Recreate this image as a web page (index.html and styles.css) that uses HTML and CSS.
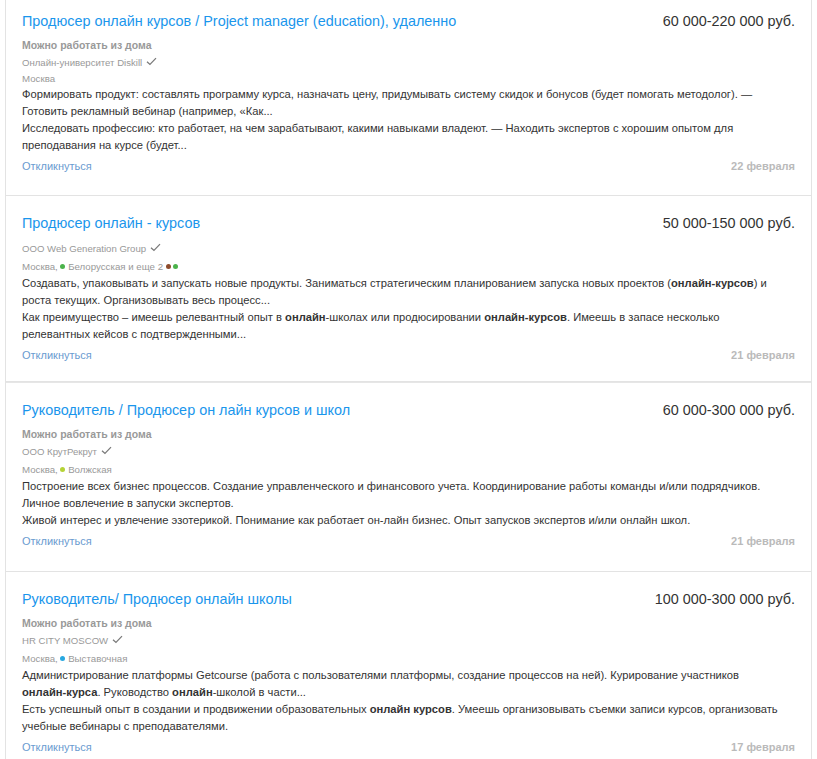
FILE: index.html
```html
<!DOCTYPE html>
<html lang="ru">
<head>
<meta charset="utf-8">
<title>Вакансии</title>
<link rel="stylesheet" href="styles.css">
</head>
<body>
<div class="list">
  <div class="vacancy first">
    <div class="head">
      <a class="title" href="#">Продюсер онлайн курсов / Project manager (education), удаленно</a>
      <div class="salary">60 000-220 000 руб.</div>
    </div>
    <div class="remote">Можно работать из дома</div>
    <div class="company">Онлайн-университет Diskill <svg class="check" viewBox="0 0 12 10" width="11" height="9"><path d="M1 5.2 L4.3 8.3 L11 1.3" fill="none" stroke="#7a7a7a" stroke-width="1.4"/></svg></div>
    <div class="loc">Москва</div>
    <div class="desc">
      <p>Формировать продукт: составлять программу курса, назначать цену, придумывать систему скидок и бонусов (будет помогать методолог). — Готовить рекламный вебинар (например, «Как...</p>
      <p>Исследовать профессию: кто работает, на чем зарабатывают, какими навыками владеют. — Находить экспертов с хорошим опытом для преподавания на курсе (будет...</p>
    </div>
    <div class="foot">
      <a class="respond" href="#">Откликнуться</a>
      <span class="date">22 февраля</span>
    </div>
  </div>

  <div class="vacancy short-bottom">
    <div class="head">
      <a class="title" href="#">Продюсер онлайн - курсов</a>
      <div class="salary">50 000-150 000 руб.</div>
    </div>
    <div class="company company-first">ООО Web Generation Group <svg class="check" viewBox="0 0 12 10" width="11" height="9"><path d="M1 5.2 L4.3 8.3 L11 1.3" fill="none" stroke="#7a7a7a" stroke-width="1.4"/></svg></div>
    <div class="loc metro">Москва, <span class="dot green"></span> Белорусская и еще 2 <span class="dot brown"></span> <span class="dot green"></span></div>
    <div class="desc">
      <p>Создавать, упаковывать и запускать новые продукты. Заниматься стратегическим планированием запуска новых проектов (<b>онлайн-курсов</b>) и роста текущих. Организовывать весь процесс...</p>
      <p>Как преимущество – имеешь релевантный опыт в <b>онлайн</b>-школах или продюсировании <b>онлайн-курсов</b>. Имеешь в запасе несколько релевантных кейсов с подтвержденными...</p>
    </div>
    <div class="foot">
      <a class="respond" href="#">Откликнуться</a>
      <span class="date">21 февраля</span>
    </div>
  </div>

  <div class="vacancy thick">
    <div class="head">
      <a class="title" href="#">Руководитель / Продюсер он лайн курсов и школ</a>
      <div class="salary">60 000-300 000 руб.</div>
    </div>
    <div class="remote">Можно работать из дома</div>
    <div class="company">ООО КрутРекрут <svg class="check" viewBox="0 0 12 10" width="11" height="9"><path d="M1 5.2 L4.3 8.3 L11 1.3" fill="none" stroke="#7a7a7a" stroke-width="1.4"/></svg></div>
    <div class="loc metro">Москва, <span class="dot lime"></span> Волжская</div>
    <div class="desc">
      <p>Построение всех бизнес процессов. Создание управленческого и финансового учета. Координирование работы команды и/или подрядчиков. Личное вовлечение в запуски экспертов.</p>
      <p>Живой интерес и увлечение эзотерикой. Понимание как работает он-лайн бизнес. Опыт запусков экспертов и/или онлайн школ.</p>
    </div>
    <div class="foot">
      <a class="respond" href="#">Откликнуться</a>
      <span class="date">21 февраля</span>
    </div>
  </div>

  <div class="vacancy">
    <div class="head">
      <a class="title" href="#">Руководитель/ Продюсер онлайн школы</a>
      <div class="salary">100 000-300 000 руб.</div>
    </div>
    <div class="remote">Можно работать из дома</div>
    <div class="company">HR CITY MOSCOW <svg class="check" viewBox="0 0 12 10" width="11" height="9"><path d="M1 5.2 L4.3 8.3 L11 1.3" fill="none" stroke="#7a7a7a" stroke-width="1.4"/></svg></div>
    <div class="loc metro">Москва, <span class="dot blue"></span> Выставочная</div>
    <div class="desc">
      <p>Администрирование платформы Getcourse (работа с пользователями платформы, создание процессов на ней). Курирование участников <b class="nowrap">онлайн-курса</b>. Руководство <b>онлайн</b>-школой в части...</p>
      <p>Есть успешный опыт в создании и продвижении образовательных <b>онлайн курсов</b>. Умеешь организовывать съемки записи курсов, организовать учебные вебинары с преподавателями.</p>
    </div>
    <div class="foot">
      <a class="respond" href="#">Откликнуться</a>
      <span class="date">17 февраля</span>
    </div>
  </div>
</div>
</body>
</html>
```

FILE: styles.css
```css
html, body {
  margin: 0;
  padding: 0;
  background: #fff;
}
body {
  font-family: "Liberation Sans", Arial, sans-serif;
  color: #333;
  overflow: hidden;
}
.list {
  margin: -7px 5px 0 5px;
  border: 1px solid #e3e3e3;
  border-bottom: none;
}
.vacancy {
  padding: 17px 16px 22px 16px;
  border-bottom: 1px solid #e3e3e3;
}
.vacancy.first {
  padding-bottom: 21px;
}
.vacancy.short-bottom {
  padding-bottom: 18px;
}
.vacancy.thick {
  border-top: 1px solid #e6e6e6;
}
.head {
  display: flex;
  justify-content: space-between;
  align-items: flex-start;
  margin-bottom: 5px;
}
.title {
  font-size: 14.4px;
  line-height: 20px;
  color: #1a96ec;
  text-decoration: none;
}
.salary {
  font-size: 14.4px;
  line-height: 20px;
  color: #333;
  white-space: nowrap;
}
.remote {
  font-size: 10.5px;
  line-height: 18px;
  color: #999;
  font-weight: bold;
}
.company {
  font-size: 9.6px;
  line-height: 18px;
  color: #999;
  display: flex;
  align-items: center;
  gap: 4px;
}
.company-first {
  padding-top: 2px;
}
.check {
  display: block;
  margin-top: -4px;
}
.loc {
  font-size: 9.7px;
  line-height: 14px;
  color: #999;
}
.loc.metro {
  line-height: 17px;
}
.dot {
  display: inline-block;
  width: 5px;
  height: 5px;
  border-radius: 50%;
  vertical-align: 1px;
}
.dot.green { background: #4bb34b; }
.dot.brown { background: #8e4b2c; }
.dot.lime { background: #b5d336; }
.dot.blue { background: #28a8e0; }
.desc {
  font-size: 11.2px;
  line-height: 17px;
  color: #333;
  padding-right: 11px;
}
.desc p {
  margin: 0;
}
.desc b {
  font-weight: bold;
}
.nowrap {
  white-space: nowrap;
}
.foot {
  display: flex;
  justify-content: space-between;
  align-items: center;
  margin-top: 4px;
  font-size: 11px;
  line-height: 16px;
}
.respond {
  color: #6a9bd0;
  text-decoration: none;
}
.date {
  color: #aaa;
  font-weight: bold;
  opacity: 0.8;
}
```
